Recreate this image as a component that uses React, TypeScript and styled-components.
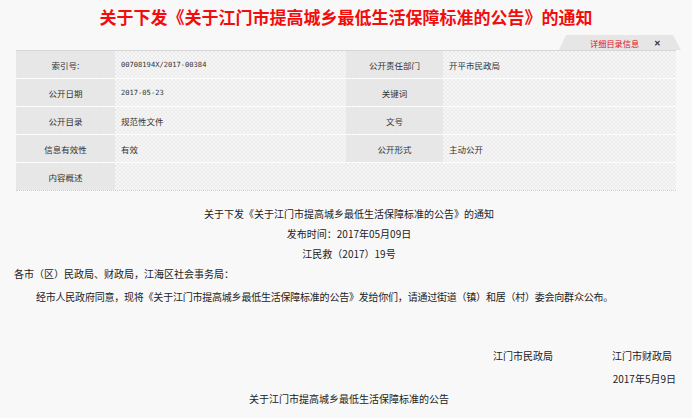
import styled, { createGlobalStyle } from "styled-components";

const GlobalStyle = createGlobalStyle`
    html, body {
        margin: 0;
        padding: 0;
        background: #f8f8f8;
        font-family: "Noto Sans CJK SC", "Liberation Sans", sans-serif;
        color: #222;
    }
`

interface InfoRow {
    leftLabel: string;
    leftValue: string;
    rightLabel?: string;
    rightValue?: string;
}

const rows: InfoRow[] = [
    { leftLabel: "索引号:", leftValue: "00708194X/2017-00384", rightLabel: "公开责任部门", rightValue: "开平市民政局" },
    { leftLabel: "公开日期", leftValue: "2017-05-23", rightLabel: "关键词", rightValue: "" },
    { leftLabel: "公开目录", leftValue: "规范性文件", rightLabel: "文号", rightValue: "" },
    { leftLabel: "信息有效性", leftValue: "有效", rightLabel: "公开形式", rightValue: "主动公开" },
    { leftLabel: "内容概述", leftValue: "" },
]

function App(){
    return(
        <>
            <GlobalStyle/>
            <Page>
                <Title>关于下发《关于江门市提高城乡最低生活保障标准的公告》的通知</Title>
                <TabBar>
                    <Tab>
                        <TabText>详细目录信息</TabText>
                        <TabClose>✕</TabClose>
                    </Tab>
                </TabBar>
                <InfoTable>
                    {rows.map((row, i) => (
                        <Row key={i}>
                            <LabelCell>{row.leftLabel}</LabelCell>
                            <ValueCell $wide={row.rightLabel === undefined} $mono={i === 0 || i === 1}>{row.leftValue}</ValueCell>
                            {row.rightLabel !== undefined && (
                                <>
                                    <LabelCell>{row.rightLabel}</LabelCell>
                                    <ValueCell>{row.rightValue}</ValueCell>
                                </>
                            )}
                        </Row>
                    ))}
                </InfoTable>
                <Article>
                    <CenterLine>关于下发《关于江门市提高城乡最低生活保障标准的公告》的通知</CenterLine>
                    <CenterLine>发布时间：2017年05月09日</CenterLine>
                    <CenterLine>江民救（2017）19号</CenterLine>
                    <Line>各市（区）民政局、财政局，江海区社会事务局：</Line>
                    <Paragraph>经市人民政府同意，现将《关于江门市提高城乡最低生活保障标准的公告》发给你们，请通过街道（镇）和居（村）委会向群众公布。</Paragraph>
                    <Signatures>
                        <Signer>江门市民政局</Signer>
                        <Signer>江门市财政局</Signer>
                    </Signatures>
                    <DateLine>2017年5月9日</DateLine>
                    <CenterLine>关于江门市提高城乡最低生活保障标准的公告</CenterLine>
                </Article>
            </Page>
        </>
    )
}

const Page = styled.div`
    width: 692px;
    height: 418px;
    overflow: hidden;
`

const Title = styled.h1`
    margin: 0;
    height: 35px;
    line-height: 34px;
    text-align: center;
    font-family: "Noto Sans CJK SC", sans-serif;
    font-size: 17px;
    font-weight: 700;
    color: #f20d0d;
`

const TabBar = styled.div`
    display: flex;
    justify-content: flex-end;
    padding-right: 11px;
    height: 15px;
`

const Tab = styled.div`
    display: flex;
    align-items: center;
    width: 122px;
    height: 15px;
    box-sizing: border-box;
    padding-left: 31px;
    background: #e6e6e6;
    clip-path: polygon(7px 0, 114px 0, 122px 100%, 0 100%);
`

const TabText = styled.span`
    font-size: 8.2px;
    color: #e0101a;
`

const TabClose = styled.span`
    margin-left: 15px;
    font-size: 8px;
    font-weight: 700;
    color: #333;
`

const InfoTable = styled.div`
    margin: 0 16px;
    width: 660px;
    border-top: 1px solid #d6d6d6;
    border-bottom: 1px dotted #cfcfcf;
`

const Row = styled.div`
    display: grid;
    grid-template-columns: 99px 231px 97px 233px;
    height: 27px;
    border-bottom: 1px dashed #ffffff;
    &:last-child {
        border-bottom: none;
    }
`

const LabelCell = styled.div`
    display: flex;
    align-items: center;
    justify-content: center;
    background: #e7e7e7;
    font-size: 8.5px;
    color: #333;
`

const ValueCell = styled.div<{ $wide?: boolean; $mono?: boolean }>`
    display: flex;
    align-items: center;
    padding-left: 6px;
    grid-column: ${p => p.$wide ? "span 3" : "auto"};
    background-color: #f1f1f1;
    background-image: repeating-conic-gradient(#ececec 0 25%, #f6f6f6 0 50%);
    background-size: 4px 4px;
    font-family: ${p => p.$mono ? '"DejaVu Sans Mono", monospace' : '"Noto Sans CJK SC", sans-serif'};
    font-size: ${p => p.$mono ? "7.1px" : "8.5px"};
    color: #333;
`

const Article = styled.div`
    margin-top: 13px;
    padding: 0 16px 0 14px;
    font-size: 10px;
    line-height: 20px;
    color: #222;
`

const CenterLine = styled.div`
    text-align: center;
    padding-left: 8px;
    height: 20px;
`

const Line = styled.div`
    height: 20px;
`

const Paragraph = styled.p`
    margin: 3px 0 0 0;
    text-indent: 22px;
    line-height: 20px;
    letter-spacing: -0.22px;
`

const Signatures = styled.div`
    display: flex;
    justify-content: flex-end;
    gap: 59px;
    margin-top: 39px;
    padding-right: 4px;
`

const Signer = styled.span`
    line-height: 20px;
`

const DateLine = styled.div`
    text-align: right;
    margin-top: 3px;
`

export default App;
